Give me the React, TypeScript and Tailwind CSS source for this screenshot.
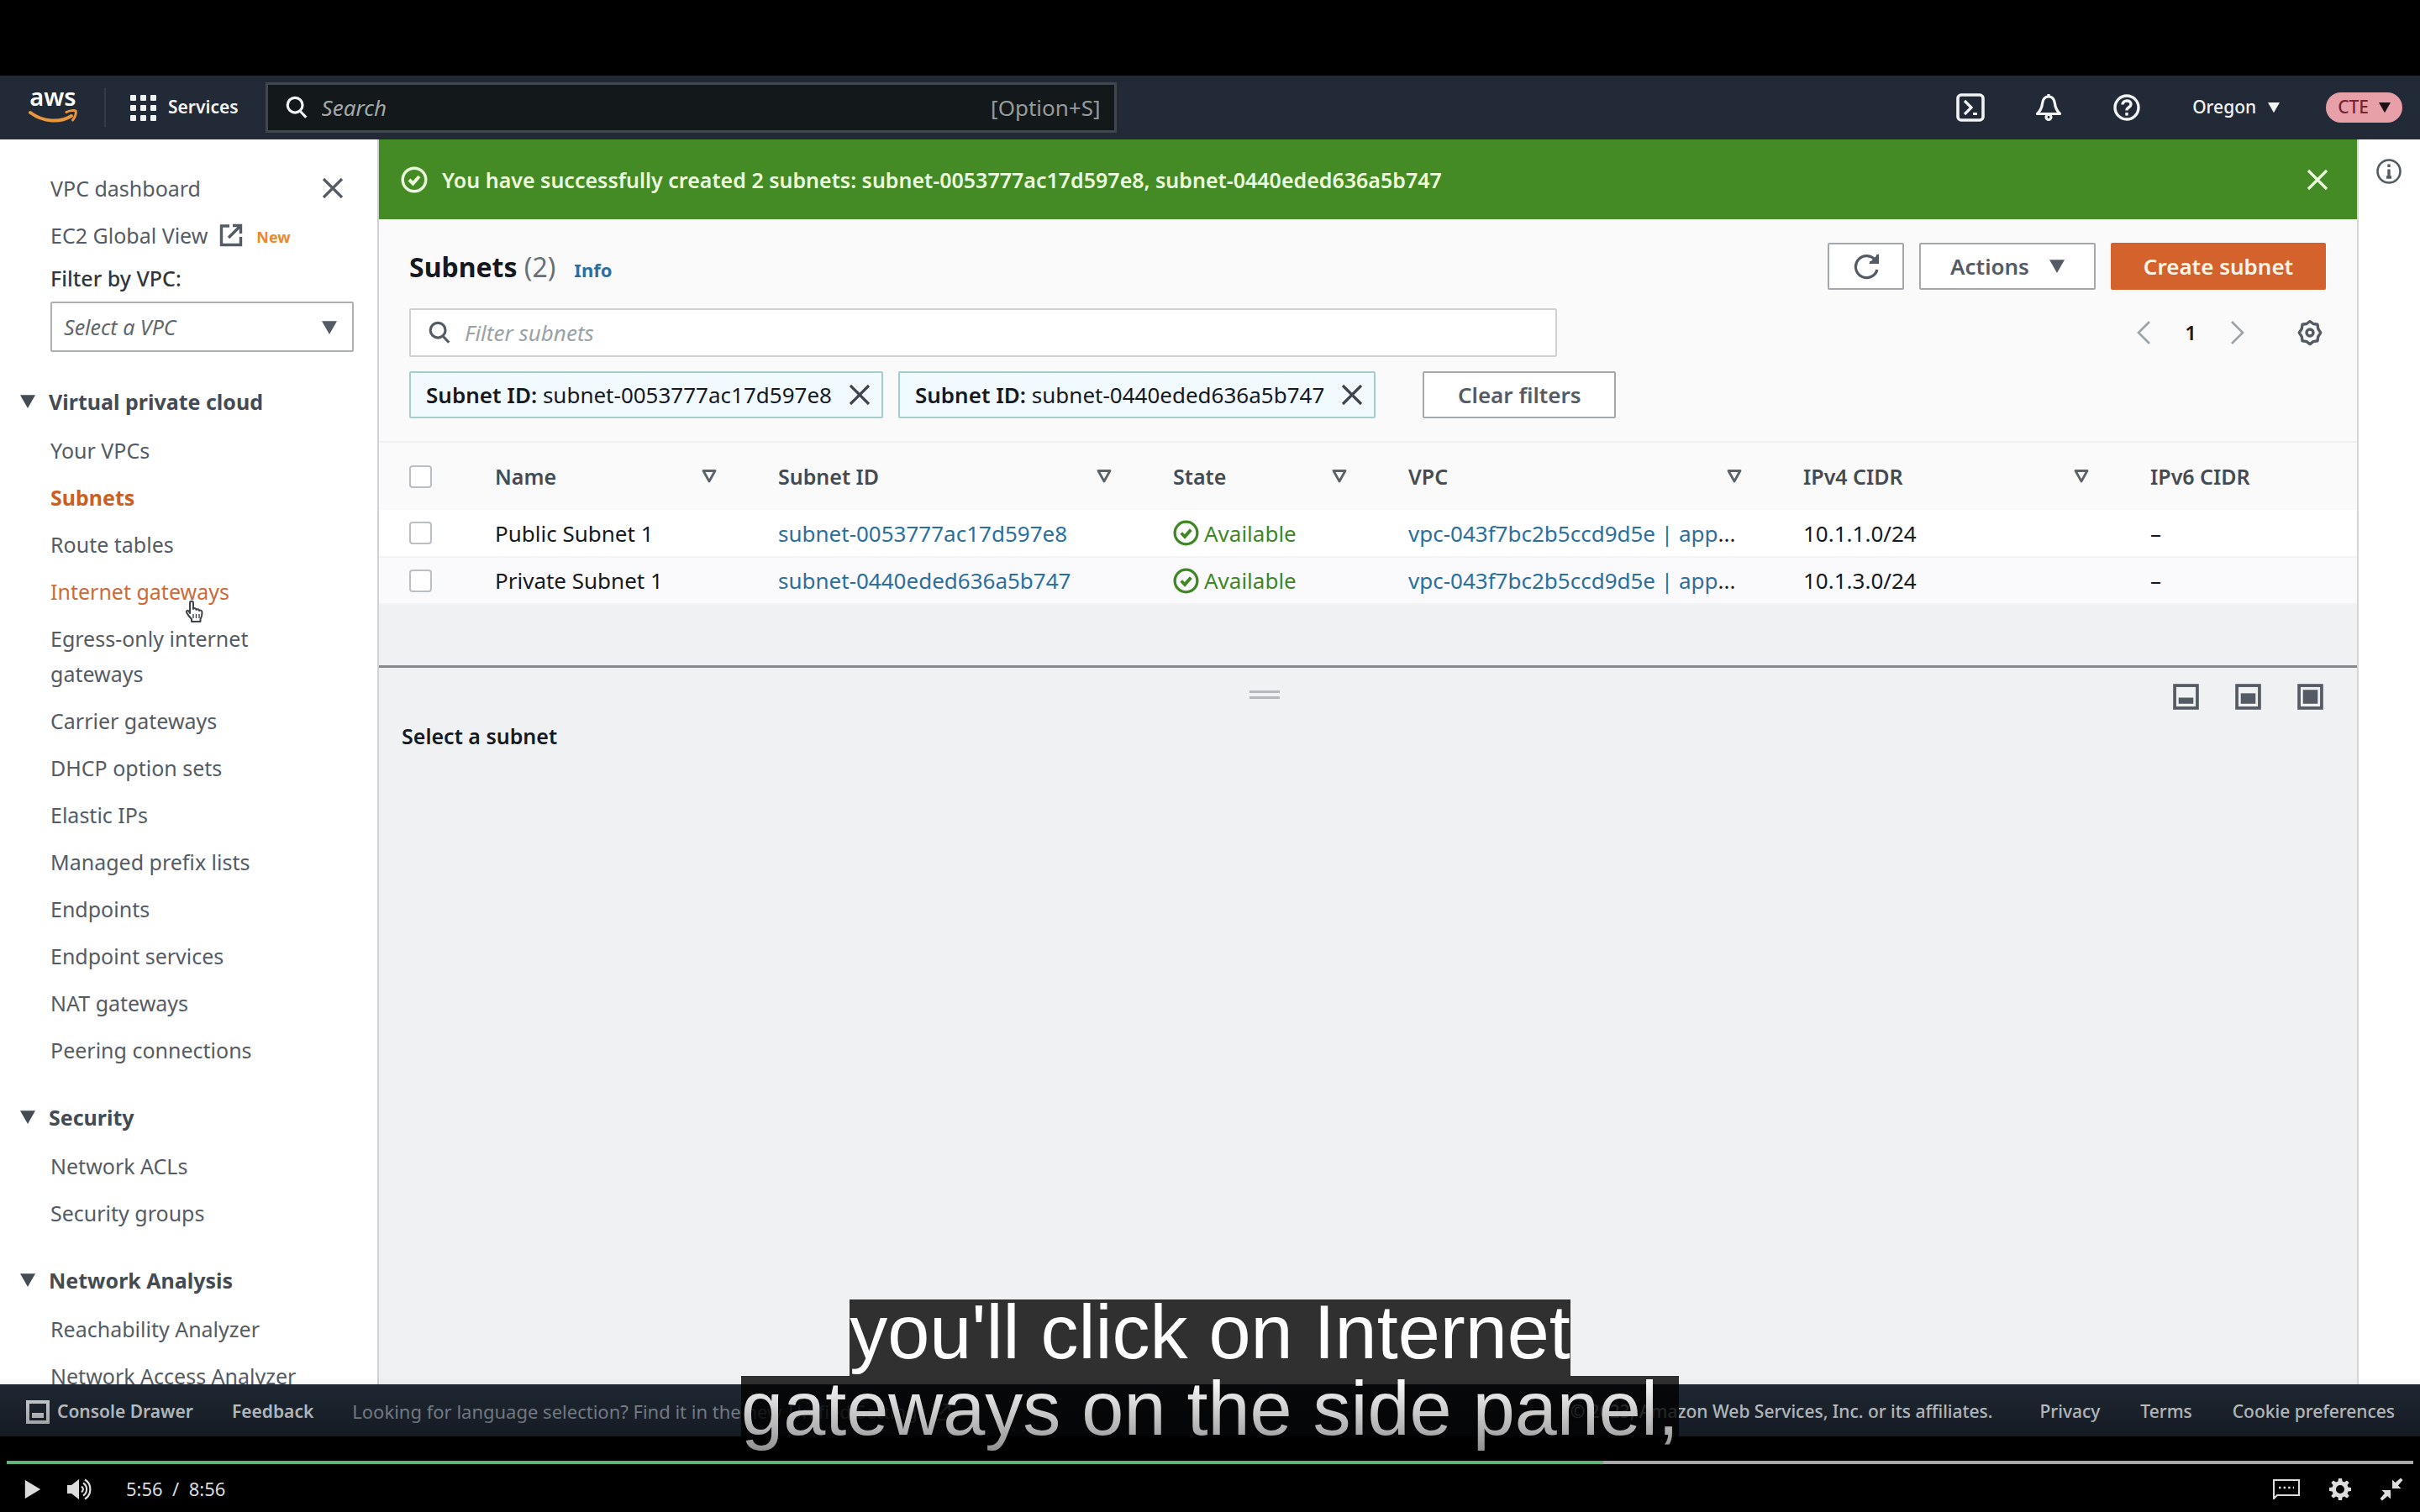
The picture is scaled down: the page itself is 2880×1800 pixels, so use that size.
import React from "react";

type IconProps = { className?: string };

function Triangle({ className = "" }: IconProps) {
  return (
    <svg viewBox="0 0 16 16" className={className} fill="currentColor" aria-hidden="true">
      <path d="M0 1h16L8 15z" />
    </svg>
  );
}

function SortTriangle() {
  return (
    <svg viewBox="0 0 18 18" className="h-[18px] w-[18px] shrink-0 text-[#5b6268]" fill="none" stroke="currentColor" strokeWidth="2.8" strokeLinejoin="round" aria-hidden="true">
      <path d="M2 2.5h14L9 15z" />
    </svg>
  );
}

function SearchIcon({ className = "" }: IconProps) {
  return (
    <svg viewBox="0 0 28 32" className={className} fill="none" stroke="currentColor" strokeWidth="3.4" aria-hidden="true">
      <circle cx="12" cy="13" r="9.5" />
      <path d="M18.5 20.5l7.5 8" />
    </svg>
  );
}

function CloseIcon({ className = "" }: IconProps) {
  return (
    <svg viewBox="0 0 26 26" className={className} fill="none" stroke="currentColor" strokeWidth="3.2" aria-hidden="true">
      <path d="M2 2l22 22M24 2L2 24" />
    </svg>
  );
}

function CheckCircle({ className = "" }: IconProps) {
  return (
    <svg viewBox="0 0 32 32" className={className} fill="none" stroke="currentColor" strokeWidth="3.4" aria-hidden="true">
      <circle cx="16" cy="16" r="13.8" />
      <path d="M10 16l4.5 4.5L22 12" strokeWidth="4" />
    </svg>
  );
}

function ExternalIcon({ className = "" }: IconProps) {
  return (
    <svg viewBox="0 0 28 28" className={className} fill="none" stroke="currentColor" strokeWidth="3.4" aria-hidden="true">
      <path d="M12 3H2.500v22.500h23V16M16 2.500h9.500V12M25 3L11 17" />
    </svg>
  );
}

function PanelIcon({ y, h }: { y: number; h: number }) {
  return (
    <svg viewBox="0 0 30 30" className="h-[31px] w-[31px] text-[#545b64]" fill="none" aria-hidden="true">
      <rect x="2" y="2" width="26" height="26" stroke="currentColor" strokeWidth="3.6" />
      <rect x="6.500" y={y} width="17" height={h} fill="currentColor" />
    </svg>
  );
}

function AwsLogo() {
  return (
    <a href="#home" aria-label="AWS home" className="flex w-[58px] flex-col items-center text-white">
      <span className="text-[29px] leading-[18px] font-semibold">aws</span>
      <svg viewBox="0 0 58 20" className="mt-[6px] h-5 w-[58px]" fill="none" aria-hidden="true">
        <path d="M2 4c16 12 36 12 49 4" stroke="#e8973a" strokeWidth="4" strokeLinecap="round" />
        <path d="M45 3.500c4-2 9-2.500 11-1.500 1 2-.5 8-3.500 11" stroke="#e8973a" strokeWidth="3" strokeLinecap="round" strokeLinejoin="round" />
      </svg>
    </a>
  );
}

function TopNav() {
  return (
    <header className="flex h-[76px] shrink-0 items-center bg-[#222a37] pr-[21px] pl-[34px] text-[#f2f3f3]">
      <AwsLogo />
      <span className="ml-8 h-[46px] w-[2px] bg-[#333c4a]" />
      <button className="ml-[29px] flex items-center gap-[14px] text-[21px] font-semibold">
        <svg viewBox="0 0 31 31" className="h-[31px] w-[31px]" fill="currentColor" aria-hidden="true">
          {[0, 12, 24].map((y) => [0, 12, 24].map((x) => <rect key={`${x}-${y}`} x={x} y={y} width="7" height="7" rx="1" />))}
        </svg>
        Services
      </button>
      <label className="ml-[32px] flex h-[60px] w-[1013px] items-center border-3 border-[#41464f] bg-[#13191b] pr-4 pl-5">
        <SearchIcon className="h-[30px] w-7 shrink-0" />
        <input aria-label="Search" placeholder="Search" className="ml-4 min-w-0 flex-1 bg-transparent text-[26px] italic outline-none placeholder:text-[#a3a9ab]" />
        <span className="text-[26px] text-[#959b9d]">[Option+S]</span>
      </label>
      <div className="ml-auto flex items-center">
        <button aria-label="CloudShell">
          <svg viewBox="0 0 34 34" className="h-[34px] w-[34px]" fill="none" stroke="currentColor" strokeWidth="3.6" aria-hidden="true">
            <rect x="2" y="2" width="30" height="30" rx="4" />
            <path d="M10 9l8 8-8 8M20 24.500h5" strokeWidth="3.200" />
          </svg>
        </button>
        <button aria-label="Notifications" className="ml-[59px]">
          <svg viewBox="0 0 34 34" className="h-[34px] w-[34px]" fill="none" stroke="currentColor" strokeWidth="3.200" strokeLinejoin="round" aria-hidden="true">
            <path d="M17 4c-5 0-7 4-7.500 8.500C9 18 7 21 3.500 24.500h27C27 21 25 18 24.500 12.500 24 8 22 4 17 4z" />
            <path d="M17 1v3" />
            <circle cx="17" cy="28.500" r="3" />
          </svg>
        </button>
        <button aria-label="Help" className="ml-[59px]">
          <svg viewBox="0 0 34 34" className="h-[34px] w-[34px]" fill="none" stroke="currentColor" strokeWidth="3.400" aria-hidden="true">
            <circle cx="17" cy="17" r="14" />
            <path d="M12 13.500c.3-6 10-6 10-.5 0 4-5 3.500-5 7.500" />
            <path d="M17 23v3.600" />
          </svg>
        </button>
        <button className="ml-[61px] flex items-center gap-[14px] text-[21px] font-medium">
          Oregon
          <Triangle className="h-[14px] w-[14px]" />
        </button>
        <button className="ml-[55px] flex h-9 items-center gap-3 rounded-full bg-[#e8a0a8] px-[14px] text-[21px] font-medium text-[#7a2230]">
          CTE
          <Triangle className="h-[14px] w-[14px] text-[#1c1114]" />
        </button>
      </div>
    </header>
  );
}

const navGroups = [
  {
    title: "Virtual private cloud",
    items: [
      "Your VPCs",
      "Subnets",
      "Route tables",
      "Internet gateways",
      "Egress-only internet gateways",
      "Carrier gateways",
      "DHCP option sets",
      "Elastic IPs",
      "Managed prefix lists",
      "Endpoints",
      "Endpoint services",
      "NAT gateways",
      "Peering connections",
    ],
  },
  { title: "Security", items: ["Network ACLs", "Security groups"] },
  { title: "Network Analysis", items: ["Reachability Analyzer", "Network Access Analyzer"] },
];

function HandCursor() {
  return (
    <svg viewBox="0 0 22 28" className="pointer-events-none absolute top-[31px] left-[160px] h-7 w-[22px]" fill="#fff" stroke="#3d4349" strokeWidth="2" strokeLinejoin="round" aria-hidden="true">
      <path d="M6 16V4c0-3 4-3 4 0v7c1-1.500 3.500-1 3.500 1 1-1.500 3.500-.8 3.500 1 1-1 3.500-.5 3.500 2 0 5-1 6-2 8v3H8v-3c-2-2-4-4-6-8-1-2 2-4 4 1z" />
      <path d="M10 17v5M13.500 17v5M17 17v5" strokeWidth="1.400" />
    </svg>
  );
}

function navColor(item: string) {
  if (item === "Subnets") return "font-bold text-[#cc5f21]";
  if (item === "Internet gateways") return "text-[#cc6a3a]";
  return "text-[#545b64]";
}

function Sidebar() {
  return (
    <nav className="w-[451px] shrink-0 overflow-hidden border-r-2 border-[#cfd1d4] bg-white text-[25px] leading-[42px] text-[#545b64]">
      <div className="flex items-center justify-between pt-[37px] pr-[40px] pl-[60px]">
        <a href="#dashboard">VPC dashboard</a>
        <button aria-label="Close navigation">
          <CloseIcon className="h-[26px] w-[26px]" />
        </button>
      </div>
      <div className="mt-[14px] flex items-center pl-[60px]">
        <a href="#global" className="flex items-center gap-[14px]">
          EC2 Global View
          <ExternalIcon className="h-7 w-7" />
        </a>
        <span className="mt-1 ml-4 text-[18px] leading-6 font-bold text-[#ec8a2a]">New</span>
      </div>
      <div className="pr-[28px] pl-[60px]">
        <label htmlFor="vpc-filter" className="mt-[9px] block font-medium text-[#2f363d]">
          Filter by VPC:
        </label>
        <div className="relative mt-[7px]">
          <select id="vpc-filter" className="h-[60px] w-full appearance-none rounded-[2px] border-2 border-[#aab0b4] bg-white px-[14px] text-[25px] italic text-[#5f666e]">
            <option>Select a VPC</option>
          </select>
          <Triangle className="pointer-events-none absolute top-[22px] right-[20px] h-[18px] w-[18px]" />
        </div>
      </div>
      <div className="flex flex-col gap-[38px] pt-[38px]">
        {navGroups.map((group) => (
          <section key={group.title}>
            <button className="flex items-center gap-4 pl-6 font-bold text-[#444b52]">
              <Triangle className="h-[18px] w-[18px]" />
              {group.title}
            </button>
            <ul className="mt-4 flex flex-col gap-[14px] pr-[70px] pl-[60px]">
              {group.items.map((item) => (
                <li key={item} className="relative">
                  <a href="#nav" className={navColor(item)}>
                    {item}
                  </a>
                  {item === "Internet gateways" && <HandCursor />}
                </li>
              ))}
            </ul>
          </section>
        ))}
      </div>
    </nav>
  );
}

function FilterChip({ id }: { id: string }) {
  return (
    <span className="flex h-14 items-center gap-5 rounded-[2px] border-2 border-[#a5cdce] bg-[#f1faff] pr-[13px] pl-[18px] text-[#16191f]">
      <span>
        <b className="font-semibold">Subnet ID:</b> {id}
      </span>
      <button aria-label={`Remove filter ${id}`}>
        <CloseIcon className="h-[26px] w-[26px] text-[#3d454d]" />
      </button>
    </span>
  );
}

const columns = ["Name", "Subnet ID", "State", "VPC", "IPv4 CIDR", "IPv6 CIDR"];
const rows = [
  { name: "Public Subnet 1", id: "subnet-0053777ac17d597e8", cidr: "10.1.1.0/24" },
  { name: "Private Subnet 1", id: "subnet-0440eded636a5b747", cidr: "10.1.3.0/24" },
];

const checkboxClass = "block h-[27px] w-[27px] appearance-none rounded-[4px] border-2 border-[#b9bfc4] bg-white";

function SubnetTable() {
  return (
    <table className="mt-[27px] w-full table-fixed text-left">
      <colgroup>
        <col className="w-[138px]" />
        <col className="w-[337px]" />
        <col className="w-[470px]" />
        <col className="w-[280px]" />
        <col className="w-[470px]" />
        <col className="w-[413px]" />
        <col />
      </colgroup>
      <thead>
        <tr className="h-[81px] border-t-2 border-[#f0eff2] text-[#444b52]">
          <th className="pl-9">
            <input type="checkbox" aria-label="Select all subnets" className={checkboxClass} />
          </th>
          {columns.map((column) => (
            <th key={column} className="pr-[73px] text-[25px] font-semibold">
              <span className="flex items-center justify-between whitespace-nowrap">
                {column}
                {column !== "IPv6 CIDR" && <SortTriangle />}
              </span>
            </th>
          ))}
        </tr>
      </thead>
      <tbody>
        {rows.map((row) => (
          <tr key={row.id} className="h-14 border-b-2 border-[#f3f2f5] bg-white text-[#16191f] even:bg-[#fafafc]">
            <td className="pl-9">
              <input type="checkbox" aria-label={`Select ${row.name}`} className={checkboxClass} />
            </td>
            <td>{row.name}</td>
            <td>
              <a href="#subnet" className="text-[#2a6f9f]">
                {row.id}
              </a>
            </td>
            <td>
              <span className="flex items-center gap-[6px] text-[#3f8624]">
                <CheckCircle className="h-[31px] w-[31px]" />
                Available
              </span>
            </td>
            <td className="whitespace-nowrap">
              <a href="#vpc" className="text-[#2a6f9f]">
                vpc-043f7bc2b5ccd9d5e | app
              </a>
              ...
            </td>
            <td>{row.cidr}</td>
            <td>–</td>
          </tr>
        ))}
      </tbody>
    </table>
  );
}

function Main() {
  return (
    <main className="flex min-w-0 flex-1 flex-col bg-[#f0f1f2] text-[26px] leading-[36px]">
      <div className="flex h-[95px] shrink-0 items-center bg-[#448b25] pr-[34px] pl-[26px] text-[#ecfbdd]" role="status">
        <CheckCircle className="h-8 w-8" />
        <p className="ml-[17px] flex-1 text-[25px] font-semibold">You have successfully created 2 subnets: subnet-0053777ac17d597e8, subnet-0440eded636a5b747</p>
        <button aria-label="Dismiss">
          <CloseIcon className="h-[26px] w-[26px]" />
        </button>
      </div>
      <section className="bg-[#fafafa]">
        <div className="flex items-center gap-[18px] pt-[28px] pr-[37px] pl-9">
          <h1 className="flex-1 pt-1 text-[32px] font-bold text-[#16191f]">
            Subnets <span className="font-normal text-[#687078]">(2)</span>
            <a href="#info" className="ml-[22px] text-[22px] text-[#2a6f9f]">
              Info
            </a>
          </h1>
          <button aria-label="Refresh" className="flex h-14 w-[91px] items-center justify-center rounded-[2px] border-2 border-[#a2a8ad] bg-white text-[#545b64]">
            <svg viewBox="0 0 32 32" className="h-8 w-8" fill="none" stroke="currentColor" strokeWidth="3.200" aria-hidden="true">
              <path d="M29 20A13 13 0 1 1 27 9" />
              <path d="M20 11.500h9.500V2" />
              <path d="M23 11l6-6v6z" fill="currentColor" />
            </svg>
          </button>
          <button className="flex h-14 w-[210px] items-center justify-center gap-6 rounded-[2px] border-2 border-[#a2a8ad] bg-white font-semibold text-[#545b64]">
            Actions
            <Triangle className="h-[18px] w-[18px]" />
          </button>
          <button className="h-14 w-[256px] rounded-[2px] bg-[#d4622c] font-semibold text-[#fff6e8]">Create subnet</button>
        </div>
        <div className="mt-[22px] flex items-center justify-between pr-[40px] pl-9">
          <label className="flex h-[58px] w-[1366px] items-center rounded-[2px] border-2 border-[#cfd0d2] bg-white pr-4 pl-5 text-[#545b64]">
            <SearchIcon className="h-[30px] w-7 shrink-0" />
            <input aria-label="Filter subnets" placeholder="Filter subnets" className="ml-4 min-w-0 flex-1 bg-transparent text-[26px] italic outline-none placeholder:text-[#9aa2a6]" />
          </label>
          <div className="flex items-center text-[#9ba2a8]">
            <button aria-label="Previous page">
              <svg viewBox="0 0 18 30" className="h-[30px] w-[18px]" fill="none" stroke="currentColor" strokeWidth="2.600" aria-hidden="true">
                <path d="M16 2L3 15l13 13" />
              </svg>
            </button>
            <span className="w-[94px] text-center text-2xl font-semibold text-[#16191f]">1</span>
            <button aria-label="Next page">
              <svg viewBox="0 0 18 30" className="h-[30px] w-[18px]" fill="none" stroke="currentColor" strokeWidth="2.600" aria-hidden="true">
                <path d="M2 2l13 13L2 28" />
              </svg>
            </button>
            <button aria-label="Preferences" className="ml-[61px] text-[#545b64]">
              <svg viewBox="0 0 32 32" className="h-8 w-8" fill="none" stroke="currentColor" strokeWidth="3.400" strokeLinejoin="round" aria-hidden="true">
                <path d="M16 2.500l4 3 5 .8.700 5 3 4.700-3 4.800-.7 5-5 .8-4 3-4-3-5-.8-.7-5L3.300 16l3-4.700.7-5 5-.8z" />
                <circle cx="16" cy="16" r="4" />
              </svg>
            </button>
          </div>
        </div>
        <div className="mt-[17px] flex items-center gap-[18px] pl-9">
          <FilterChip id="subnet-0053777ac17d597e8" />
          <FilterChip id="subnet-0440eded636a5b747" />
          <button className="ml-[38px] h-14 w-[230px] rounded-[2px] border-2 border-[#a2a8ad] bg-white font-semibold text-[#545b64]">Clear filters</button>
        </div>
        <SubnetTable />
      </section>
      <section className="mt-[72px] flex-1 border-t-3 border-[#85898c] pt-[19px]">
        <div className="relative flex justify-end gap-[43px] pr-[40px]">
          <button aria-label="Resize panel" className="absolute top-[8px] left-[44%] flex h-[10px] w-9 flex-col justify-between">
            <span className="h-[3px] w-full bg-[#b4b8ba]" />
            <span className="h-[3px] w-full bg-[#b4b8ba]" />
          </button>
          <button aria-label="Small panel">
            <PanelIcon y={16} h={7} />
          </button>
          <button aria-label="Medium panel">
            <PanelIcon y={11} h={12} />
          </button>
          <button aria-label="Full panel">
            <PanelIcon y={7} h={16} />
          </button>
        </div>
        <h2 className="mt-[13px] pl-[27px] text-[25px] font-semibold text-[#16191f]">Select a subnet</h2>
      </section>
    </main>
  );
}

function Footer() {
  return (
    <footer className="flex h-[62px] shrink-0 items-center bg-[#202935] pt-[3px] pr-[30px] pl-[31px] text-[21px] text-[#dfe3e6]">
      <button className="flex items-center gap-[9px] font-semibold">
        <svg viewBox="0 0 28 28" className="h-7 w-7" fill="none" aria-hidden="true">
          <rect x="2" y="2" width="24" height="24" stroke="currentColor" strokeWidth="4" />
          <rect x="7" y="15" width="14" height="6" fill="currentColor" />
        </svg>
        Console Drawer
      </button>
      <a href="#feedback" className="ml-[46px] font-semibold">
        Feedback
      </a>
      <p className="ml-[46px] flex items-center gap-2 text-[22px] text-[#8f99a3]">
        Looking for language selection? Find it in the new
        <a href="#settings" className="flex items-center gap-2">
          Unified Settings
          <ExternalIcon className="h-[22px] w-[22px]" />
        </a>
      </p>
      <p className="ml-auto font-medium">© 2023, Amazon Web Services, Inc. or its affiliates.</p>
      <a href="#privacy" className="ml-14 font-medium">Privacy</a>
      <a href="#terms" className="ml-12 font-medium">Terms</a>
      <a href="#cookies" className="ml-12 font-medium">Cookie preferences</a>
    </footer>
  );
}

function Captions() {
  return (
    <div className="pointer-events-none absolute inset-x-0 bottom-[71px] flex flex-col items-center font-['Liberation_Sans',sans-serif] text-[90px] leading-[79px] whitespace-nowrap text-white">
      <span className="bg-black/80 pb-3">you'll click on Internet</span>
      <span className="bg-black/80 pb-3">gateways on the side panel,</span>
    </div>
  );
}

function PlayerControls() {
  return (
    <div className="relative z-10 flex h-[90px] shrink-0 flex-col px-2 pt-[29px] text-[#dddddd]">
      <div role="progressbar" aria-label="Playback position" aria-valuenow={66} className="h-1 w-full bg-[#a9a9a9]">
        <div className="h-full bg-[#62b377]" style={{ width: `${(1900 / 2864) * 100}%` }} />
      </div>
      <div className="flex flex-1 items-center pt-[2px] pr-3 pl-5">
        <button aria-label="Play">
          <svg viewBox="0 0 22 24" className="h-[22px] w-[22px]" fill="currentColor" aria-hidden="true">
            <path d="M1 0l20 12L1 24z" />
          </svg>
        </button>
        <button aria-label="Mute" className="ml-[30px]">
          <svg viewBox="0 0 30 26" className="h-[26px] w-[30px]" fill="currentColor" aria-hidden="true">
            <path d="M0 8h5l9-7v24l-9-7H0z" />
            <g fill="none" stroke="currentColor" strokeWidth="2.200">
              <path d="M17 9.500c2.500 2 2.500 5 0 7M19 5.500c5.500 3.500 5.500 11.500 0 15M21 1.500c8.500 5 8.500 18 0 23" />
            </g>
          </svg>
        </button>
        <span className="ml-10 text-[22px] whitespace-pre">5:56  /  8:56</span>
        <button aria-label="Subtitles" className="ml-auto">
          <svg viewBox="0 0 32 24" className="h-6 w-8" fill="none" stroke="currentColor" strokeWidth="2" aria-hidden="true">
            <path d="M1 23V1h30v18H5z" />
            <path d="M7 10h18" strokeWidth="2.400" strokeDasharray="2.400 3.200" />
          </svg>
        </button>
        <button aria-label="Settings" className="ml-[34px]">
          <svg viewBox="0 0 28 28" className="h-7 w-7" fill="currentColor" fillRule="evenodd" aria-hidden="true">
            <path d="M12 1h4l.6 3.600 2.400 1 3-2.200 2.700 2.700-2.200 3 1 2.400 3.500.5v4l-3.500.5-1 2.400 2.200 3-2.700 2.700-3-2.200-2.400 1L16 27h-4l-.6-3.600-2.400-1-3 2.200-2.700-2.700 2.200-3-1-2.400L1 16v-4l3.500-.5 1-2.400-2.200-3L6 3.400l3 2.200 2.400-1zM14 9a5 5 0 1 0 0 10 5 5 0 0 0 0-10z" />
          </svg>
        </button>
        <button aria-label="Exit full screen" className="ml-[33px]">
          <svg viewBox="0 0 28 28" className="h-7 w-7" fill="currentColor" aria-hidden="true">
            <path d="M15 2.500v10.500h10.500l-3.600-3.600L27.500 3 25 .5l-6.400 5.600zM13 25.500V15H2.500l3.600 3.600L.5 25 3 27.500l6.400-5.600z" />
          </svg>
        </button>
      </div>
    </div>
  );
}

export default function App() {
  return (
    <div className="relative flex h-screen w-full flex-col overflow-hidden bg-black pt-[90px] font-['Noto_Sans',sans-serif]">
      <TopNav />
      <div className="flex min-h-0 flex-1">
        <Sidebar />
        <Main />
        <aside className="w-[75px] shrink-0 border-l-2 border-[#d5d6d8] bg-white pt-[22px] pl-[20px]">
          <button aria-label="Info" className="text-[#545b64]">
            <svg viewBox="0 0 32 32" className="h-8 w-8" fill="none" stroke="currentColor" strokeWidth="2.600" aria-hidden="true">
              <circle cx="16" cy="16" r="13.500" />
              <path d="M16 7.500v3.500M16 13.500v9M13 23h6" strokeWidth="3.400" />
            </svg>
          </button>
        </aside>
      </div>
      <Footer />
      <Captions />
      <div className="pointer-events-none absolute inset-x-0 bottom-0 h-[160px] bg-linear-to-b from-transparent to-black/80" />
      <PlayerControls />
    </div>
  );
}
